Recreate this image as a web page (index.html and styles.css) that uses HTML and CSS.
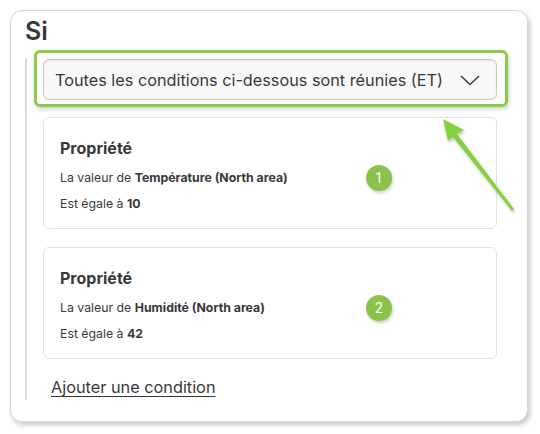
FILE: index.html
```html
<!DOCTYPE html>
<html lang="fr">
<head>
<meta charset="utf-8">
<title>Si</title>
<link rel="stylesheet" href="styles.css">
</head>
<body>
<div class="panel">
  <h2 class="title">Si</h2>
  <div class="body">
    <div class="select-wrap">
      <div class="select">
        <span>Toutes les conditions ci-dessous sont réunies (ET)</span>
        <svg class="chev" width="20" height="11" viewBox="0 0 20 11"><path d="M1.5 1.5 L10 9.5 L18.5 1.5" fill="none" stroke="#444" stroke-width="1.7" stroke-linecap="round" stroke-linejoin="round"/></svg>
      </div>
      <div class="highlight"></div>
    </div>
    <div class="cond">
      <div class="cond-title">Propriété</div>
      <div class="line">La valeur de <b>Température (North area)</b></div>
      <div class="line">Est égale à <b>10</b></div>
      <span class="badge">1</span>
    </div>
    <div class="cond">
      <div class="cond-title">Propriété</div>
      <div class="line">La valeur de <b>Humidité (North area)</b></div>
      <div class="line">Est égale à <b>42</b></div>
      <span class="badge">2</span>
    </div>
    <a class="add" href="#">Ajouter une condition</a>
  </div>
</div>
<svg class="arrow" width="540" height="434" viewBox="0 0 540 434">
  <defs>
    <filter id="sh" x="-20%" y="-20%" width="140%" height="140%"><feDropShadow dx="1" dy="2" stdDeviation="1.5" flood-color="#000" flood-opacity="0.25"/></filter>
  </defs>
  <g filter="url(#sh)" fill="#86cf3e">
    <polygon points="443,119 464,130 457,134 514,209 512,211 453,137 448,141"/>
  </g>
</svg>
</body>
</html>
```
FILE: styles.css
```css
* { box-sizing: border-box; }
html, body { margin: 0; padding: 0; background: #fff; }
body { width: 540px; height: 434px; overflow: hidden; position: relative; font-family: Inter, "Noto Sans", sans-serif; color: #383838; }

.panel {
  margin: 10px 0 0 10px;
  width: 518px;
  height: 412px;
  border: 1px solid #d8d8d8;
  border-radius: 12px;
  box-shadow: 2px 3px 5px rgba(0,0,0,0.22);
  padding: 5px 30px 0 14px;
  background: #fff;
}
.title {
  margin: 0;
  font-size: 25px;
  line-height: 30px;
  font-weight: 600;
  color: #383838;
}
.body {
  margin-top: 12px;
  border-left: 2px solid #dcdcdc;
  padding: 1px 0 0 16px;
  height: 342px;
  display: flex;
  flex-direction: column;
}
.select-wrap { position: relative; }
.select {
  height: 41px;
  border: 1px solid #c8c8c8;
  border-radius: 6px;
  background: #f8f8f8;
  box-shadow: inset 0 1px 2px rgba(0,0,0,0.08);
  display: flex;
  align-items: center;
  justify-content: space-between;
  padding: 0 16px 0 11px;
  font-size: 16.25px;
  color: #383838;
}
.chev { margin-top: 1px; }
.highlight {
  position: absolute;
  left: -9px; right: -11px; top: -9px; bottom: -7px;
  border: 3.5px solid #8bcc47;
  border-radius: 6px;
  box-shadow: 1px 2px 4px rgba(0,0,0,0.2);
  pointer-events: none;
}
.cond {
  position: relative;
  margin-top: 17px;
  height: 112px;
  border: 1px solid #e2e2e2;
  border-radius: 6px;
  padding: 20px 16px 0 16px;
}
.cond + .cond { margin-top: 18px; }
.cond-title { font-size: 16px; font-weight: 700; color: #383838; line-height: 20px; margin-bottom: 13px; }
.line { font-size: 12.3px; line-height: 14px; color: #383838; margin-bottom: 12px; }
.line b { font-weight: 700; }
.badge {
  position: absolute;
  left: 322px; top: 47px;
  width: 26px; height: 26px;
  border-radius: 50%;
  background: #8bc34a;
  box-shadow: 1px 2px 3px rgba(0,0,0,0.2);
  color: #fff;
  font-family: Roboto, sans-serif;
  font-size: 14px;
  line-height: 26px;
  text-align: center;
}
.add {
  margin-top: 18px;
  margin-left: 8px;
  font-size: 16.3px;
  color: #383838;
  text-decoration: underline;
  text-underline-offset: 3px;
  text-decoration-thickness: 1px;
  align-self: flex-start;
}
.arrow { position: absolute; left: 0; top: 0; pointer-events: none; }
```
